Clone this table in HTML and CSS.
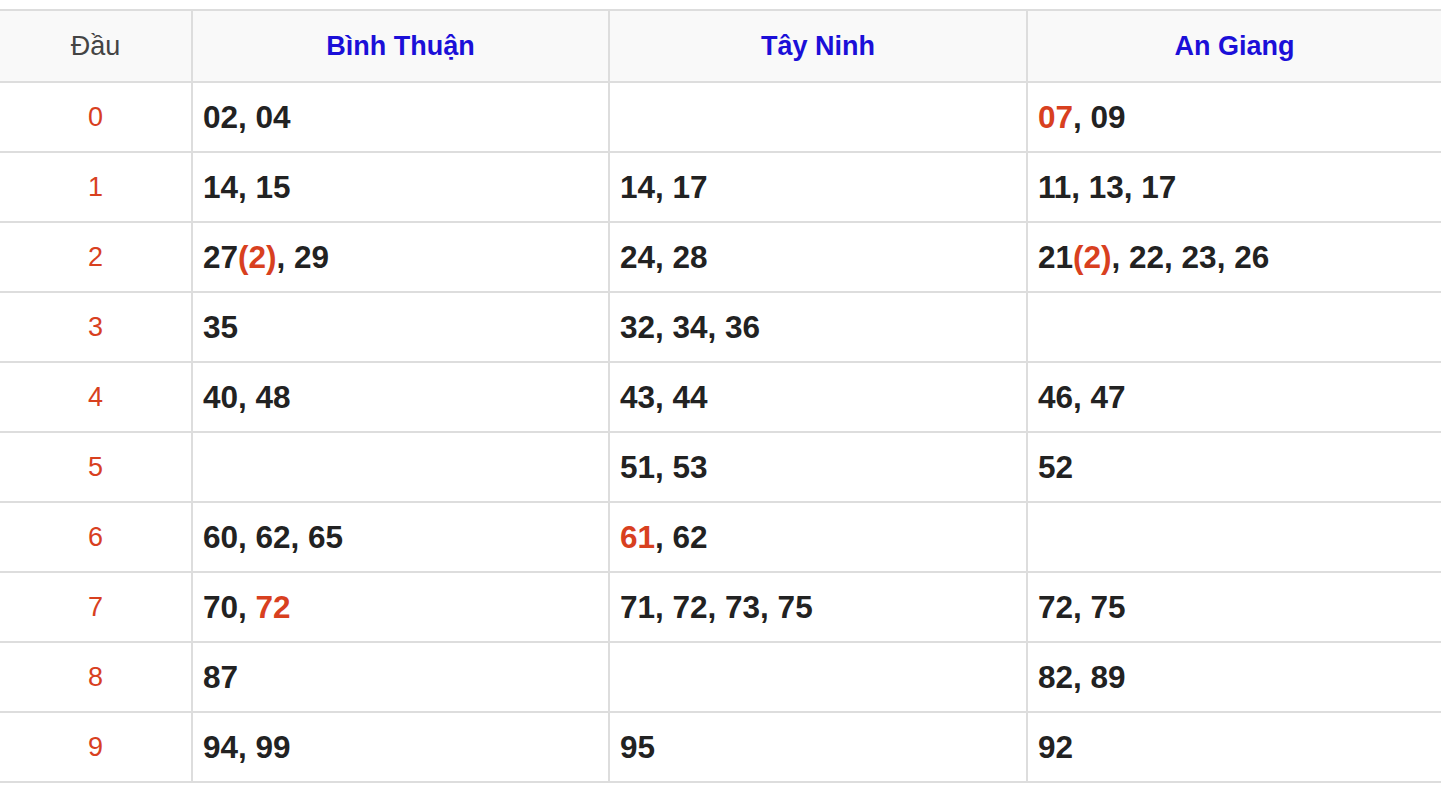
FILE: index.html
```html
<!DOCTYPE html>
<html lang="vi">
<head>
<meta charset="utf-8">
<title>Loto</title>
<link rel="stylesheet" href="styles.css">
</head>
<body>
<table class="loto">
  <colgroup>
    <col class="c-head">
    <col class="c-a">
    <col class="c-b">
    <col class="c-c">
  </colgroup>
  <thead>
    <tr>
      <th class="dau">Đầu</th>
      <th class="prov">Bình Thuận</th>
      <th class="prov">Tây Ninh</th>
      <th class="prov">An Giang</th>
    </tr>
  </thead>
  <tbody>
    <tr><td class="dau">0</td><td class="num">02, 04</td><td class="num"></td><td class="num"><span class="hl">07</span>, 09</td></tr>
    <tr><td class="dau">1</td><td class="num">14, 15</td><td class="num">14, 17</td><td class="num">11, 13, 17</td></tr>
    <tr><td class="dau">2</td><td class="num">27<span class="hl">(2)</span>, 29</td><td class="num">24, 28</td><td class="num">21<span class="hl">(2)</span>, 22, 23, 26</td></tr>
    <tr><td class="dau">3</td><td class="num">35</td><td class="num">32, 34, 36</td><td class="num"></td></tr>
    <tr><td class="dau">4</td><td class="num">40, 48</td><td class="num">43, 44</td><td class="num">46, 47</td></tr>
    <tr><td class="dau">5</td><td class="num"></td><td class="num">51, 53</td><td class="num">52</td></tr>
    <tr><td class="dau">6</td><td class="num">60, 62, 65</td><td class="num"><span class="hl">61</span>, 62</td><td class="num"></td></tr>
    <tr><td class="dau">7</td><td class="num">70, <span class="hl">72</span></td><td class="num">71, 72, 73, 75</td><td class="num">72, 75</td></tr>
    <tr><td class="dau">8</td><td class="num">87</td><td class="num"></td><td class="num">82, 89</td></tr>
    <tr><td class="dau">9</td><td class="num">94, 99</td><td class="num">95</td><td class="num">92</td></tr>
  </tbody>
</table>
</body>
</html>
```
FILE: styles.css
```css
html, body {
  margin: 0;
  padding: 0;
  background: #fff;
}
body {
  padding-top: 9px;
  font-family: "Liberation Sans", Arial, sans-serif;
}
.loto {
  width: 1441px;
  border-collapse: collapse;
  table-layout: fixed;
}
.c-head { width: 192px; }
.c-a { width: 417px; }
.c-b { width: 418px; }
.c-c { width: 414px; }
.loto th, .loto td {
  border: 2px solid #dddddd;
  height: 70px;
  padding: 0 10px;
  box-sizing: border-box;
}
.loto tr > :first-child { border-left: none; }
.loto tr > :last-child { border-right: none; }
.loto thead th {
  background: #f9f9f9;
  height: 72px;
  font-size: 27px;
}
.loto th.dau {
  font-weight: normal;
  color: #444;
}
.loto th.prov {
  color: #1b0fd8;
  font-weight: bold;
}
.loto td.dau {
  text-align: center;
  color: #d8401f;
  font-size: 27px;
}
.loto td.num {
  font-size: 31.5px;
  font-weight: bold;
  color: #222;
  text-align: left;
}
.hl { color: #d8401f; }
```
